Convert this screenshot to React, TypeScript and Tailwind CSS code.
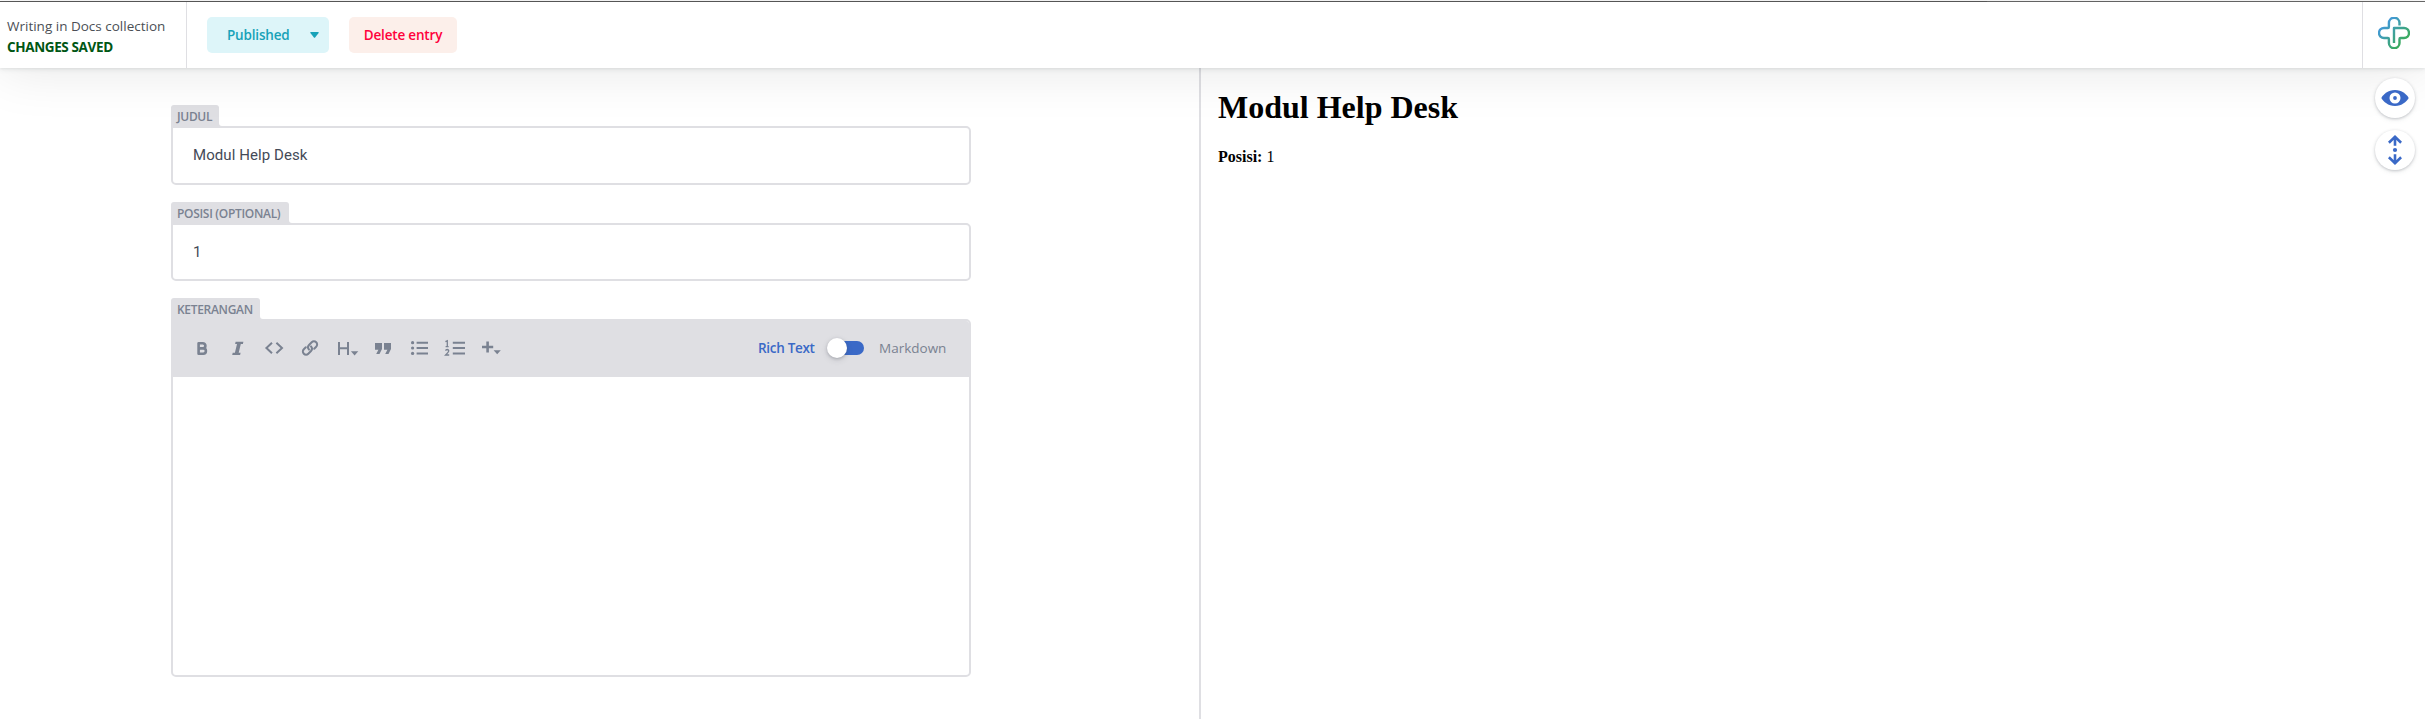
import React from "react";

const Caret = ({ className }: { className?: string }) => (
  <svg viewBox="0 0 9 6" className={className} fill="currentColor">
    <path d="M0.8 0H8.2Q9 .1 8.6 .9L5.1 5.5Q4.5 6.2 3.9 5.5L.4 .9Q0 .1 .8 0Z" />
  </svg>
);

const toolbarIcons: React.ReactNode[] = [
  <path key="b" fill="none" stroke="currentColor" strokeWidth="2.6" strokeLinejoin="round" d="M14.6 13.2V23.8H19.2a2.7 2.7 0 0 0 0-5.4H14.6H18.8a2.6 2.6 0 0 0 0-5.2Z" />,
  <path key="i" fill="currentColor" d="M15.6 11.7H23.4L22.9 14H20.8L18.7 22.7H20.6L20.1 25H12.2L12.7 22.7H14.9L17 14H15.1Z" />,
  <path key="c" fill="none" stroke="currentColor" strokeWidth="2" d="M16 12.7L10.4 18L16 23.3M20.4 12.7L26 18L20.4 23.3" />,
  <g key="l" fill="none" stroke="currentColor" strokeWidth="2" strokeLinecap="round">
    <path d="M17 19.6a3.4 3.4 0 0 1 0-4.6l2.7-2.7a3.1 3.1 0 0 1 4.5 4.5l-2 2" />
    <path d="M19 16.4a3.4 3.4 0 0 1 0 4.6l-2.7 2.7a3.1 3.1 0 0 1-4.5-4.5l2-2" />
  </g>,
  <g key="h" fill="currentColor">
    <path d="M10 12H12V17.3H19V12H21V25H19V19.2H12V25H10Z" />
    <path d="M22.9 21.2H30.3L26.6 25.4Z" />
  </g>,
  <path key="q" fill="currentColor" d="M11 13H18V19L15.5 24H12.2L14.4 19.8H11ZM20 13H27V19L24.5 24H21.2L23.4 19.8H20Z" />,
  <g key="ul" fill="currentColor">
    <circle cx="12.6" cy="12.7" r="1.6" />
    <circle cx="12.6" cy="18" r="1.6" />
    <circle cx="12.6" cy="23.4" r="1.6" />
    <path d="M16.6 11.7H28V13.7H16.6ZM16.6 17H28V19H16.6ZM16.6 22.4H28V24.4H16.6Z" />
  </g>,
  <g key="ol" fill="currentColor">
    <path d="M16.8 11.7H29V13.7H16.8ZM16.8 17H29V19H16.8ZM16.8 22.4H29V24.4H16.8Z" />
    <path fill="none" stroke="currentColor" strokeWidth="1.3" d="M9.4 11.6L11.3 10.8V16.6M9.6 16.6H12.6M9.5 20.6Q9.8 19.5 11.2 19.5Q12.8 19.6 12.7 21Q12.6 22 9.6 25H13.2" />
  </g>,
  <g key="p" fill="currentColor">
    <path d="M14.3 11.6H16.9V15.7H21.2V18.300H16.900V22.400H14.300V18.300H10V15.700H14.300Z" />
    <path d="M21.600 20.200H28.800L25.200 24.200Z" />
  </g>,
];

const FieldLabel = ({ text, className }: { text: string; className: string }) => (
  <div className={`relative flex h-[21px] items-center rounded-t-[3px] bg-[#dfdfe3] pt-0.5 pl-1.5 text-[12px] font-semibold tracking-[-0.31px] text-[#7a8291] ${className}`}>
    <span className="whitespace-nowrap">{text}</span>
    <svg className="absolute bottom-0 -right-[3px] size-[3px]" viewBox="0 0 3 3">
      <path fill="#dfdfe3" d="M0 0Q0 3 3 3H0Z" />
    </svg>
  </div>
);

const RoundButton = ({ children }: { children: React.ReactNode }) => (
  <button className="flex size-10 items-center justify-center rounded-full bg-white text-[#3a69c7] shadow-[0_2px_6px_0_rgba(68,74,87,0.05),0_1px_3px_0_rgba(68,74,87,0.3)]">
    {children}
  </button>
);

export default function App() {
  return (
    <div className="flex h-[719px] w-full flex-col overflow-hidden bg-white font-['Open_Sans','Noto_Sans',sans-serif]">
      <div className="mt-px flex h-px shrink-0 bg-[#6b6b6b]">
        <div className="w-[1987px] bg-[#5c5c5c]" />
      </div>
      <header className="relative z-10 flex h-[66px] shrink-0 bg-white shadow-[0_2px_6px_0_rgba(68,74,87,0.05),0_1px_3px_0_rgba(68,74,87,0.1),0_2px_54px_rgba(0,0,0,0.1)]">
        <div className="flex w-[187px] flex-col justify-center border-r border-[#dfdfe3] pt-[3px] pl-[7px] leading-[21px] whitespace-nowrap">
          <div className="text-[13.5px] text-[#4b4f55]">Writing in Docs collection</div>
          <div className="text-[13.5px] font-bold tracking-[-0.37px] text-[#005614]">CHANGES SAVED</div>
        </div>
        <div className="flex grow items-center pl-5 text-[13.5px] font-semibold tracking-[-0.18px]">
          <button className="flex h-9 w-[122px] items-center justify-between rounded-[5px] bg-[#ddf5f9] pr-2.5 pl-5 text-[#17a2b8]">
            <span className="pt-px">Published</span>
            <Caret className="h-1.5 w-[9px]" />
          </button>
          <button className="ml-5 h-9 w-[108px] rounded-[5px] bg-[#fcefea] pt-px text-[#ff003b]">Delete entry</button>
        </div>
        <div className="flex w-[63px] items-center border-l border-[#dfdfe3] pb-1 pl-[15px]">
          <svg className="size-8" viewBox="0 0 32 32" fill="none" strokeWidth="2.4" strokeLinejoin="round">
            <defs>
              <linearGradient id="brand" x1="6" y1="6" x2="26" y2="26" gradientUnits="userSpaceOnUse">
                <stop stopColor="#4298dc" />
                <stop offset="1" stopColor="#3aab57" />
              </linearGradient>
            </defs>
            <path stroke="url(#brand)" d="M16 26V11H26a5 5 0 0 1 0 10H22.500Q21.500 21 21.500 22V26a5.300 5.300 0 0 1-10.600 0V22Q10.900 21 9.900 21H6a5 5 0 0 1 0-10H9.900Q10.900 11 10.900 10V6a5.300 5.300 0 0 1 10.600 0V8.400" />
          </svg>
        </div>
      </header>
      <div className="flex min-h-0 grow">
        <main className="flex w-[1199px] shrink-0 flex-col items-start pt-[37px] pl-[171px]">
          <FieldLabel text="JUDUL" className="w-12" />
          <div className="flex h-[59px] w-[800px] items-center rounded-[5px] rounded-tl-none border-2 border-[#dfdfe3] bg-white pl-5 font-[Roboto,sans-serif] text-[15px] tracking-[0.08px] text-[#444a57]">Modul Help Desk</div>
          <FieldLabel text="POSISI (OPTIONAL)" className="mt-[17px] w-[118px]" />
          <div className="flex h-[58px] w-[800px] items-center rounded-[5px] rounded-tl-none border-2 border-[#dfdfe3] bg-white pl-5 font-[Roboto,sans-serif] text-[15px] text-[#444a57]">1</div>
          <FieldLabel text="KETERANGAN" className="mt-[17px] w-[89px]" />
          <div className="flex h-[358px] w-[800px] flex-col overflow-hidden rounded-[5px] rounded-tl-none border-2 border-[#dfdfe3] bg-white">
            <div className="flex h-14 shrink-0 items-center bg-[#dfdfe3] pb-0.5 pl-[11px] text-[13.500px] text-[#7a8291]">
              {toolbarIcons.map((icon, i) => (
                <svg key={i} className="size-9 shrink-0" viewBox="0 0 36 36">
                  {icon}
                </svg>
              ))}
              <div className="ml-auto flex items-center pr-[24px]">
                <span className="w-[56px] font-semibold tracking-[-0.3px] whitespace-nowrap text-[#3a69c7]">Rich Text</span>
                <div className="mr-[15px] ml-[13px] flex h-5 w-[38px] items-center">
                  <div className="ml-[3px] flex h-3.5 w-[34px] items-center rounded-full bg-[#3a69c7]">
                    <div className="-ml-[3px] size-5 shrink-0 rounded-full bg-white shadow-[0_2px_6px_0_rgba(68,74,87,0.15),0_1px_3px_0_rgba(68,74,87,0.3)]" />
                  </div>
                </div>
                <span className="-ml-px w-[66px] whitespace-nowrap">Markdown</span>
              </div>
            </div>
          </div>
        </main>
        <section className="flex grow justify-between border-l-2 border-[#dfdfe3] pl-[17px] font-['Liberation_Serif',serif] text-black">
          <div className="pt-[21px]">
            <h1 className="text-[32px] leading-9 font-bold">Modul Help Desk</h1>
            <p className="mt-[23px] text-base leading-[18px]"><b>Posisi:</b> 1</p>
          </div>
          <div className="relative z-20 flex flex-col gap-3 pt-2.5 pr-2.5">
            <RoundButton>
              <svg className="h-[18px] w-7" viewBox="0 0 28 18">
                <path fill="currentColor" d="M14 1C21 1 25.500 5.500 27.300 8.200Q27.800 9 27.300 9.800C25.500 12.500 21 17 14 17S2.500 12.500 .7 9.800Q.2 9 .7 8.200C2.500 5.500 7 1 14 1Z" />
                <circle cx="14" cy="9" r="3.700" fill="none" stroke="white" strokeWidth="3.600" />
              </svg>
            </RoundButton>
            <RoundButton>
              <svg className="h-[30px] w-4" viewBox="0 0 16 30" fill="none" stroke="currentColor" strokeWidth="2.600">
                <path d="M8 10.800V2M1.900 7.800L8 1.900L14.100 7.800M8 19.200V28M1.900 22.200L8 28.100L14.100 22.200" />
                <circle cx="8" cy="15" r="2.100" fill="currentColor" stroke="none" />
              </svg>
            </RoundButton>
          </div>
        </section>
      </div>
    </div>
  );
}
